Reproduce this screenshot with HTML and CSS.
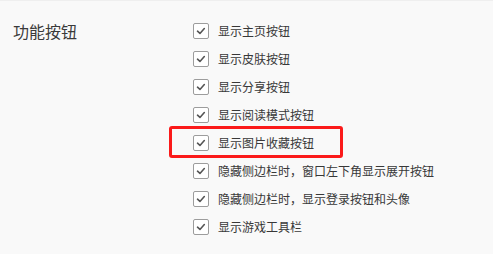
FILE: index.html
```html
<!DOCTYPE html>
<html lang="zh-CN">
<head>
<meta charset="utf-8">
<link rel="stylesheet" href="styles.css">
</head>
<body>
<div class="page">
  <div class="section">
    <div class="label">功能按钮</div>
    <div class="options">
      <div class="row"><span class="cb"><svg viewBox="0 0 16 16"><path d="M4 8.2 L6.8 10.8 L11.8 5.2"/></svg></span><span class="txt">显示主页按钮</span></div>
      <div class="row"><span class="cb"><svg viewBox="0 0 16 16"><path d="M4 8.2 L6.8 10.8 L11.8 5.2"/></svg></span><span class="txt">显示皮肤按钮</span></div>
      <div class="row"><span class="cb"><svg viewBox="0 0 16 16"><path d="M4 8.2 L6.8 10.8 L11.8 5.2"/></svg></span><span class="txt">显示分享按钮</span></div>
      <div class="row"><span class="cb"><svg viewBox="0 0 16 16"><path d="M4 8.2 L6.8 10.8 L11.8 5.2"/></svg></span><span class="txt">显示阅读模式按钮</span></div>
      <div class="row highlighted"><span class="mark"></span><span class="cb"><svg viewBox="0 0 16 16"><path d="M4 8.2 L6.8 10.8 L11.8 5.2"/></svg></span><span class="txt">显示图片收藏按钮</span></div>
      <div class="row"><span class="cb"><svg viewBox="0 0 16 16"><path d="M4 8.2 L6.8 10.8 L11.8 5.2"/></svg></span><span class="txt">隐藏侧边栏时，窗口左下角显示展开按钮</span></div>
      <div class="row"><span class="cb"><svg viewBox="0 0 16 16"><path d="M4 8.2 L6.8 10.8 L11.8 5.2"/></svg></span><span class="txt">隐藏侧边栏时，显示登录按钮和头像</span></div>
      <div class="row"><span class="cb"><svg viewBox="0 0 16 16"><path d="M4 8.2 L6.8 10.8 L11.8 5.2"/></svg></span><span class="txt">显示游戏工具栏</span></div>
    </div>
  </div>
</div>
</body>
</html>
```
FILE: styles.css
```css
html, body {
  margin: 0;
  padding: 0;
  background: #f9f9f9;
}
.page {
  width: 493px;
  height: 254px;
  box-sizing: border-box;
  border-top: 1px solid #efefef;
  font-family: "Noto Sans CJK SC", "Noto Sans", sans-serif;
  color: #333;
}
.section {
  display: flex;
  padding: 16px 0 0 13px;
}
.label {
  width: 180px;
  font-size: 16px;
  line-height: 28px;
  color: #3a3a3a;
}
.options {
  display: flex;
  flex-direction: column;
}
.row {
  position: relative;
  display: flex;
  align-items: center;
  height: 28px;
}
.cb {
  width: 16px;
  height: 16px;
  box-sizing: border-box;
  border: 1px solid #9c9c9c;
  border-radius: 2px;
  background: #fff;
  display: flex;
}
.cb svg {
  width: 14px;
  height: 14px;
  margin: 0;
}
.cb path {
  fill: none;
  stroke: #555;
  stroke-width: 1.8;
  stroke-linecap: round;
  stroke-linejoin: round;
}
.txt {
  margin-left: 9px;
  font-size: 12px;
  line-height: 16px;
  color: #383838;
}
.mark {
  position: absolute;
  left: -24px;
  top: -3px;
  width: 174px;
  height: 32px;
  box-sizing: border-box;
  border: 3px solid #fb1a1a;
  border-radius: 3px;
}
```
